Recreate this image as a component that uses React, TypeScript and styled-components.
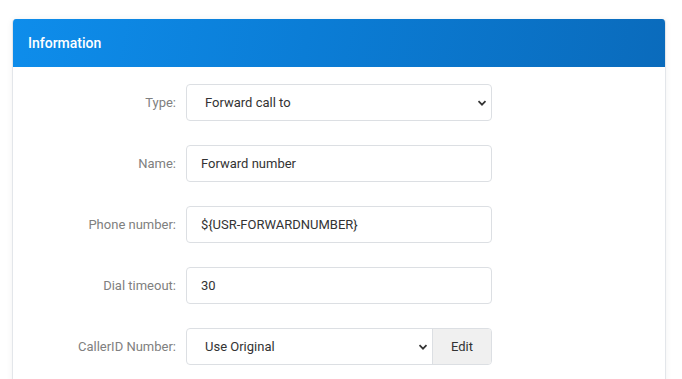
import styled, { createGlobalStyle } from "styled-components"

const GlobalStyle = createGlobalStyle`
  html, body {
    margin: 0;
    padding: 0;
    background: #ffffff;
    font-family: Roboto, "Liberation Sans", Arial, sans-serif;
  }
`

const Page = styled.div`
  padding: 19px 16px 0 12px;
`

const Card = styled.div`
  background: #ffffff;
  border: 1px solid #e3e6ea;
  border-top: none;
  border-radius: 4px;
  box-shadow: 0 0 6px rgba(0, 0, 0, 0.06);
  overflow: hidden;
`

const Header = styled.div`
  height: 48px;
  display: flex;
  align-items: center;
  padding: 0 15px;
  background: linear-gradient(100deg, #0e8deb 0%, #0b7dd6 45%, #0a6bbc 100%);
  color: #ffffff;
  font-size: 14px;
  font-weight: 500;
`

const Body = styled.div`
  display: flex;
  flex-direction: column;
  gap: 24px;
  padding: 17px 0 20px;
`

const Row = styled.div`
  display: grid;
  grid-template-columns: 173px 306px;
  align-items: center;
`

const Label = styled.label`
  text-align: right;
  padding-right: 10px;
  font-size: 13px;
  color: #808080;
`

const Control = styled.div<{ $select?: boolean }>`
  box-sizing: border-box;
  height: 37px;
  border: 1px solid #dcdfe3;
  border-radius: 4px;
  display: flex;
  align-items: center;
  padding: 0 ${({ $select }) => ($select ? "4px 0 18px" : "14px")};
  font-size: 13px;
  color: #333333;
  background: #ffffff;
`

const Value = styled.span`
  flex: 1;
`

const Group = styled.div`
  display: flex;
  height: 37px;
  border: 1px solid #dcdfe3;
  border-radius: 4px;
  box-sizing: border-box;
  overflow: hidden;
`

const GroupSelect = styled.div`
  flex: 1;
  display: flex;
  align-items: center;
  padding: 0 4px 0 18px;
  font-size: 13px;
  color: #333333;
`

const EditButton = styled.div`
  width: 58px;
  display: flex;
  align-items: center;
  justify-content: center;
  background: #f0f0f0;
  border-left: 1px solid #dcdfe3;
  font-size: 13px;
  color: #333333;
`

const Chevron = () => (
  <svg width="10" height="10" viewBox="0 0 10 10">
    <path d="M1.5 3.2 L5 6.7 L8.5 3.2" fill="none" stroke="#333" strokeWidth="1.7" />
  </svg>
)

const App = () => (
  <Page>
    <GlobalStyle />
    <Card>
      <Header>Information</Header>
      <Body>
        <Row>
          <Label>Type:</Label>
          <Control $select>
            <Value>Forward call to</Value>
            <Chevron />
          </Control>
        </Row>
        <Row>
          <Label>Name:</Label>
          <Control>Forward number</Control>
        </Row>
        <Row>
          <Label>Phone number:</Label>
          <Control>{"${USR-FORWARDNUMBER}"}</Control>
        </Row>
        <Row>
          <Label>Dial timeout:</Label>
          <Control>30</Control>
        </Row>
        <Row>
          <Label>CallerID Number:</Label>
          <Group>
            <GroupSelect>
              <Value>Use Original</Value>
              <Chevron />
            </GroupSelect>
            <EditButton>Edit</EditButton>
          </Group>
        </Row>
      </Body>
    </Card>
  </Page>
)

export default App
